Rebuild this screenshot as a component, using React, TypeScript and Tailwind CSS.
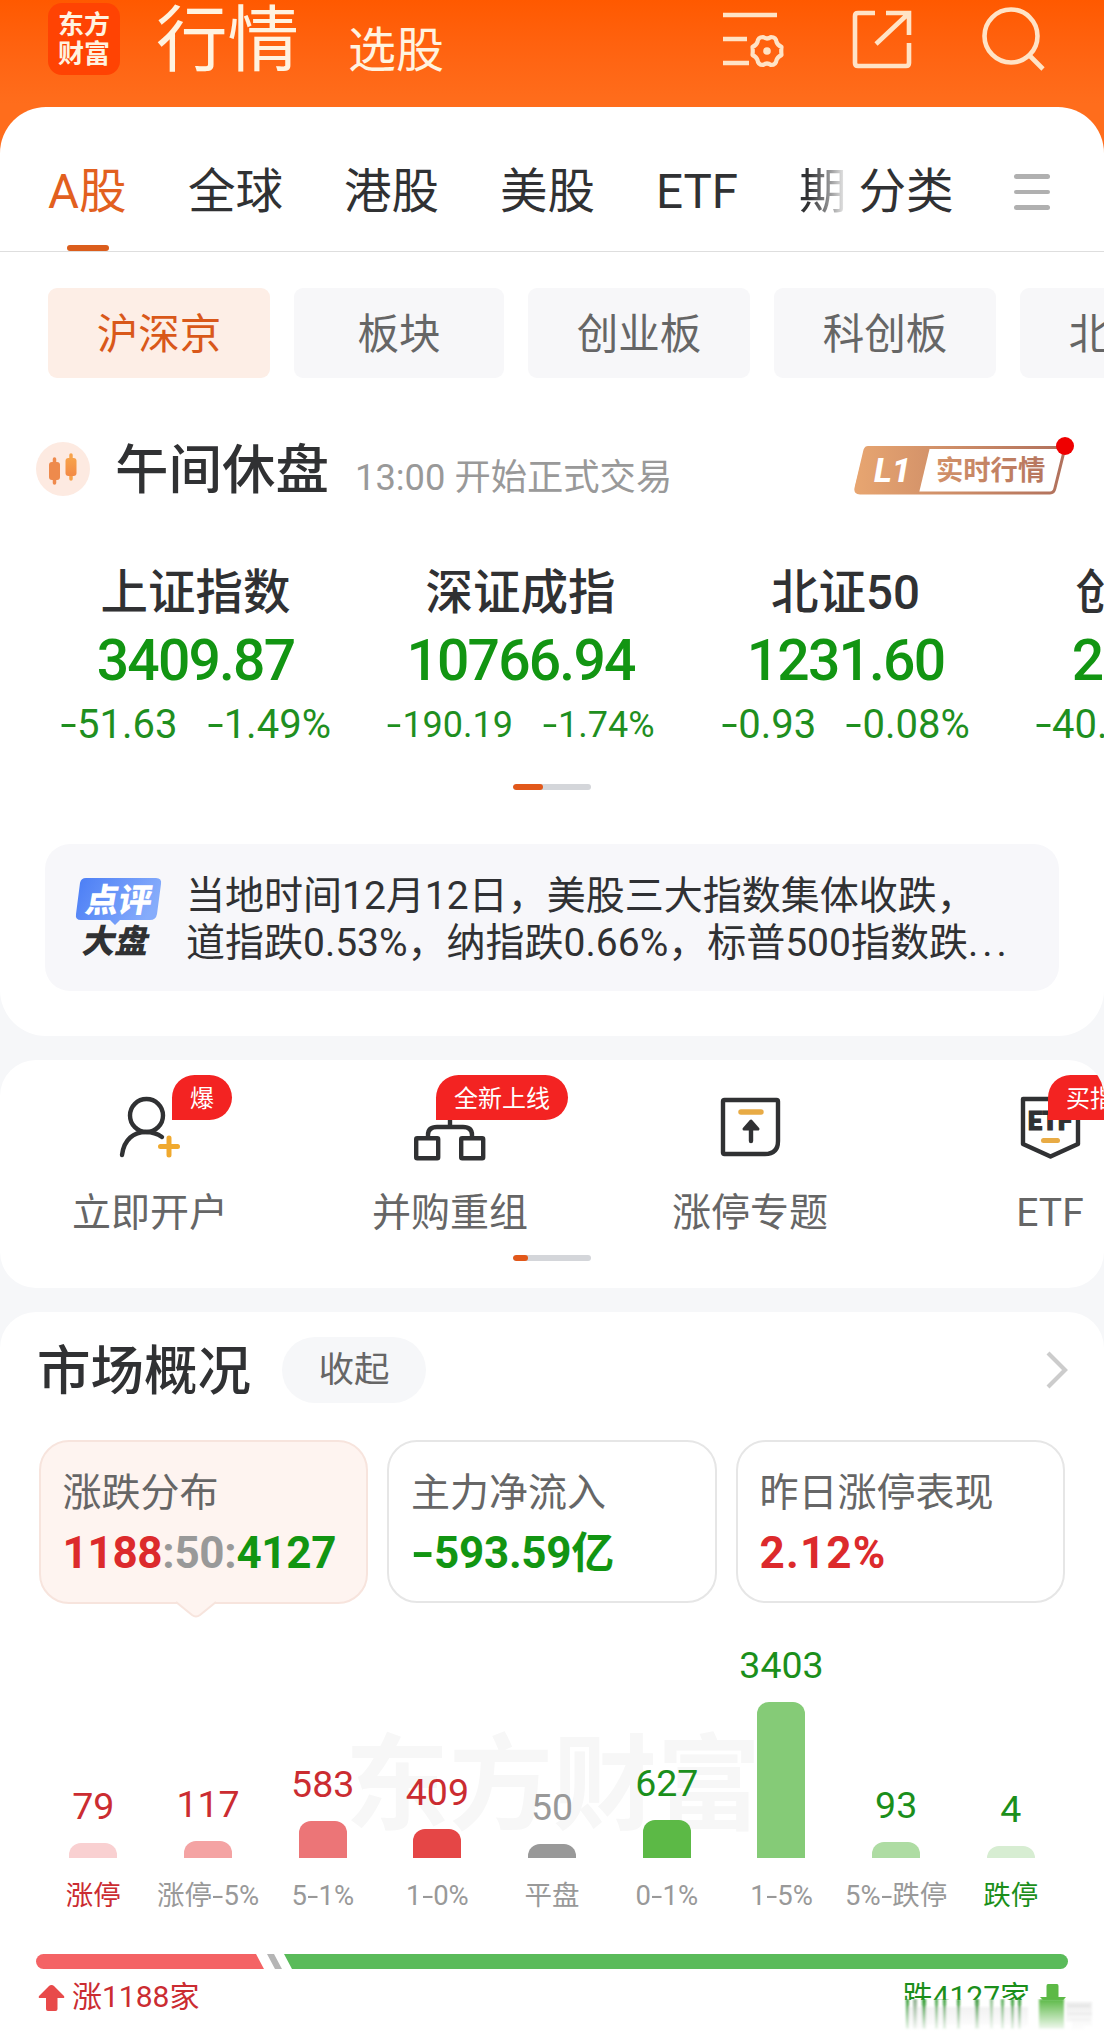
import type { ReactNode } from 'react';
import clsx from 'clsx';

const tabs = ['全球', '港股', '美股', 'ETF'];

const boards = [
  { label: '沪深京', width: 'w-[222px]', active: true },
  { label: '板块', width: 'w-[210px]' },
  { label: '创业板', width: 'w-[222px]' },
  { label: '科创板', width: 'w-[222px]' },
  { label: '北证板', width: 'w-[222px]' },
];

const indices = [
  { name: '上证指数', value: '3409.87', change: '51.63', percent: '1.49%' },
  { name: '深证成指', value: '10766.94', change: '190.19', percent: '1.74%', small: true },
  { name: '北证50', value: '1231.60', change: '0.93', percent: '0.08%' },
  { name: '创业板指', value: '2235.33', change: '40.65', percent: '1.79%' },
];

const distribution = [
  { label: '涨停', count: 79, height: 15, bar: 'bg-[#f9d0d1]', text: 'text-[#cb2c31]', labelText: 'text-[#cb2c31]' },
  { label: '涨停-5%', count: 117, height: 17, bar: 'bg-[#f4a3a3]', text: 'text-[#cb2c31]' },
  { label: '5-1%', count: 583, height: 37, bar: 'bg-[#ec7577]', text: 'text-[#cb2c31]' },
  { label: '1-0%', count: 409, height: 29, bar: 'bg-[#e54646]', text: 'text-[#cb2c31]' },
  { label: '平盘', count: 50, height: 14, bar: 'bg-[#999999]', text: 'text-[#999999]' },
  { label: '0-1%', count: 627, height: 38, bar: 'bg-[#5cb946]', text: 'text-[#1b8f1b]' },
  { label: '1-5%', count: 3403, height: 156, bar: 'bg-[#85cb77]', text: 'text-[#1b8f1b]' },
  { label: '5%-跌停', count: 93, height: 16, bar: 'bg-[#aedca3]', text: 'text-[#1b8f1b]' },
  { label: '跌停', count: 4, height: 12, bar: 'bg-[#d7edd2]', text: 'text-[#1b8f1b]', labelText: 'text-[#1b8f1b]' },
];

const Minus = () => <span className="mx-[3px] inline-block scale-x-[1.45]">-</span>;

const Pager = ({ wide }: { wide?: boolean }) => (
  <div className="mx-auto h-1.5 w-[78px] overflow-hidden rounded-full bg-[#d4d6da]">
    <div className={clsx('h-full rounded-full bg-[#e2581a]', wide ? 'w-[30px]' : 'w-[15px]')} />
  </div>
);

const Header = () => (
  <header className="flex h-[160px] items-start bg-linear-to-b from-[#ff5900] from-0% to-[#ff6d1c] to-65% text-[#fff3e0]">
    <div className="mt-[3px] ml-12 flex h-[72px] w-[72px] flex-col items-center justify-center rounded-[14px] bg-[#ff4303] pt-[2px] text-[26px] leading-[29px] font-bold">
      <span>东方</span>
      <span>财富</span>
    </div>
    <h1 className="mt-[2px] ml-9 text-[71.500px] leading-[78px]">行情</h1>
    <span className="mt-[21px] ml-[49px] text-[48px] leading-[60px]">选股</span>
    <svg className="absolute top-0 left-[720px]" width="336" height="80" fill="none" stroke="#ffe3c6" strokeWidth="4.6">
      <path d="M3 15h54M3 39h24M3 63h26" />
      <path
        strokeWidth="4.2"
        strokeLinejoin="round"
        d="M43 37q4 3 8 0q5 0 5.500 5q1 3 5 5q-.5 4 0 8q-4 2-5 5q-.5 5-5.500 5q-4-3-8 0q-5 0-5.500-5q-1-3-5-5q.5-4 0-8q4-2 5-5q.5-5 5.500-5z"
      />
      <circle cx="47" cy="51" r="3.800" fill="#ffe3c6" stroke="none" />
      <path d="M155 13h-17q-3 0-3 3v47q0 3 3 3h48q3 0 3-3V43M166 13h23v22M188 14l-32 30" />
      <circle cx="291" cy="36" r="26.500" />
      <path d="M309 55l14 14" />
    </svg>
  </header>
);

const Tabs = () => (
  <nav className="relative flex h-[145px] items-center border-b border-[#dedede] pt-[28px] text-[47.500px] text-[#303133]">
    <div className="absolute bottom-0 left-[67px] h-1.5 w-[42px] rounded-full bg-[#db5d1c]" />
    <span className="ml-12 w-[79px] whitespace-nowrap text-[#e2601f]">A股</span>
    <div className="ml-[61px] flex gap-[61px]">
      {tabs.map((tab) => (
        <span key={tab}>{tab}</span>
      ))}
    </div>
    <span className="ml-[61px] bg-linear-to-r from-[#303133] from-20% to-[#e8e8e8] to-95% bg-clip-text text-transparent">期</span>
    <span className="ml-[12px]">分类</span>
    <div className="relative -top-[1px] mr-[54px] ml-auto flex w-9 flex-col gap-[11px]">
      <i className="h-[4.500px] rounded-full bg-[#b0b0b0]" />
      <i className="h-[4.500px] rounded-full bg-[#b0b0b0]" />
      <i className="h-[4.500px] rounded-full bg-[#b0b0b0]" />
    </div>
  </nav>
);

const LevelBadge = () => (
  <svg width="222" height="64" viewBox="0 0 222 64">
    <defs>
      <linearGradient id="copper" gradientUnits="userSpaceOnUse" x1="0" y1="0" x2="214" y2="0">
        <stop offset="0" stopColor="#e8a671" />
        <stop offset="1" stopColor="#b0705c" />
      </linearGradient>
    </defs>
    <path d="M15 13.500H212L202 54q-1 5-5 5H7q-5 0-4-5L12 16q1-2.500 3-2.500z" fill="none" stroke="url(#copper)" strokeWidth="3" />
    <path d="M16 13H77L66 59H7q-6 0-5-6L11 17q1-4 5-4z" fill="url(#copper)" />
    <text x="21" y="48" fill="#fff" fontSize="34" fontWeight="800" fontStyle="italic" fontFamily="Roboto">L1</text>
    <text x="83" y="46" fill="url(#copper)" fontSize="27.300" fontWeight="700" fontFamily="Noto Sans CJK SC">实时行情</text>
    <circle cx="212" cy="12" r="9" fill="#ef0000" />
  </svg>
);

const MarketStatus = () => (
  <div className="mt-[59px] flex h-16 items-center pl-9">
    <svg width="54" height="54" viewBox="0 0 54 54">
      <defs>
        <linearGradient id="candle" x1="0" y1="0" x2="0" y2="1">
          <stop offset="0" stopColor="#f7a24a" />
          <stop offset="1" stopColor="#f38a45" />
        </linearGradient>
      </defs>
      <circle cx="27" cy="27" r="27" fill="#fdeae1" />
      <path d="M18.500 17v24" stroke="#ef8a4c" strokeWidth="3.500" strokeLinecap="round" />
      <rect x="13" y="20" width="11" height="18" rx="3" fill="#ee8a4c" />
      <path d="M35 13v24" stroke="#f7a24a" strokeWidth="3.500" strokeLinecap="round" />
      <rect x="29.500" y="16" width="11" height="18" rx="3" fill="url(#candle)" />
    </svg>
    <h2 className="mt-[5px] ml-[25px] text-[53.500px] font-medium text-[#303133]">午间休盘</h2>
    <span className="mt-[19px] ml-[26px] text-[36.300px] text-[#999]">13:00 开始正式交易</span>
    <div className="relative -top-[3px] ml-auto mr-[29px]">
      <LevelBadge />
    </div>
  </div>
);

const IndexStrip = () => (
  <div className="mt-[57px] flex h-[200px] pl-[33px] text-center">
    {indices.map((item) => (
      <div key={item.name} className="w-[325px] shrink-0 whitespace-nowrap">
        <div className="text-[47.500px] leading-[70px] font-medium text-[#303133]">{item.name}</div>
        <div className="text-[57px] leading-[66px] font-medium tracking-[-1.800px] text-[#129512]">{item.value}</div>
        <div
          className={clsx(
            'flex justify-center leading-[62px] text-[#1f8f1f]',
            item.small ? 'gap-[29px] text-[36px]' : 'gap-[29px] text-[40px]'
          )}
        >
          <span><Minus />{item.change}</span>
          <span><Minus />{item.percent}</span>
        </div>
      </div>
    ))}
  </div>
);

const Comment = () => (
  <div className="mx-[45px] mt-[54px] flex h-[147px] rounded-[25px] bg-[#f7f7fa]">
    <svg className="mt-[30px] ml-[28px] shrink-0" width="92" height="90" viewBox="0 0 92 90">
      <defs>
        <linearGradient id="bubble" x1="0" y1="0" x2="1" y2="0.300">
          <stop offset="0" stopColor="#4a7df5" />
          <stop offset="1" stopColor="#86acfb" />
        </linearGradient>
      </defs>
      <path d="M13 4H83q6 0 5 6L84 40q-1 6-7 6H47l-5 5-5-5H8q-6 0-5-6L7 9q1-5 6-5z" fill="url(#bubble)" />
      <g fontFamily="Noto Sans CJK SC" fontWeight="900">
        <text transform="translate(11 38) skewX(-10)" fill="#fff" fontSize="33">点评</text>
        <text transform="translate(8 79) skewX(-12)" fill="#303133" fontSize="33">大盘</text>
      </g>
    </svg>
    <p className="mt-[29px] ml-[21px] text-[39px] leading-[46.500px] whitespace-nowrap text-[#303133]">
      当地时间12月12日，美股三大指数集体收跌，
      <br />
      道指跌0.53%，纳指跌0.66%，标普500指数跌<span className="tracking-[4px]">...</span>
    </p>
  </div>
);

const Shortcut = ({ label, badge, badgeLeft, children }: { label: string; badge?: string; badgeLeft?: string; children: ReactNode }) => (
  <div className="relative flex w-[300px] shrink-0 flex-col items-center">
    <svg className="mt-[30px]" width="90" height="76" viewBox="0 0 90 76" fill="none" stroke="#303133" strokeWidth="4.400">
      {children}
    </svg>
    {badge && (
      <span
        className={clsx(
          'absolute top-[15px] h-[45px] rounded-[23px] rounded-bl-none bg-[#f32322] px-[18px] text-[24px] leading-[48px] whitespace-nowrap text-white',
          badgeLeft
        )}
      >
        {badge}
      </span>
    )}
    <span className="mt-[18px] text-[39px] leading-[58px] text-[#666]">{label}</span>
  </div>
);

const Shortcuts = () => (
  <section className="mt-6 h-[228px] overflow-hidden rounded-[36px] bg-white">
    <div className="flex h-[195px]">
      <Shortcut label="立即开户" badge="爆" badgeLeft="left-[172px]">
        <circle cx="41.500" cy="25.500" r="16.500" />
        <path d="M17 65C19 49 29 42 41 42Q50 42 57 47" strokeLinecap="round" />
        <path d="M64 48v17M55.500 56.500h17" stroke="#f0a92e" strokeWidth="5" strokeLinecap="round" />
      </Shortcut>
      <Shortcut label="并购重组" badge="全新上线" badgeLeft="left-[136px]">
        <path d="M45 28v9M23 47V45Q23 37 32 37H58Q67 37 67 45V47" />
        <rect x="11.200" y="48.200" width="22" height="20" rx="1" />
        <rect x="56.200" y="48.200" width="22" height="20" rx="1" />
      </Shortcut>
      <Shortcut label="涨停专题">
        <path d="M19.500 10h52q1.500 0 1.500 1.500V51Q73 64 60 64H19.500Q18 64 18 62.500V11.500Q18 10 19.500 10z" />
        <path d="M36 22h20" stroke="#e8ab45" strokeWidth="5.500" strokeLinecap="round" />
        <path d="M46 34v17" strokeLinecap="round" />
        <path d="M46 31l7 8H39z" fill="#303133" strokeWidth="3" strokeLinejoin="round" />
      </Shortcut>
      <Shortcut label="ETF" badge="买指数" badgeLeft="left-[148px]">
        <path d="M18 9H73V54L45.500 66.500L18 54z" strokeLinejoin="round" />
        <text x="23" y="40" fill="#303133" stroke="#303133" strokeWidth="1.200" fontSize="25" fontWeight="900" fontFamily="Roboto">ETF</text>
        <path d="M38.500 50.500h14" stroke="#e8ab45" strokeWidth="5" strokeLinecap="round" />
      </Shortcut>
    </div>
    <Pager />
  </section>
);

const SummaryCards = () => (
  <div className="mt-[38px] grid grid-cols-3 gap-[19px] pr-[39px] pl-[38.500px] text-[44px] font-bold tracking-[-0.300px]">
    <div className="relative h-[164px] rounded-[30px] border-2 border-[#f7e4dd] bg-[#fef4f0] pt-[21px] pl-[22px]">
      <div className="text-[39px] leading-[60px] font-normal tracking-normal text-[#666]">涨跌分布</div>
      <div className="leading-[60px] text-[#999]">
        <span className="text-[#dc2a2c]">1188</span>:50:<span className="text-[#129512]">4127</span>
      </div>
      <svg className="absolute -bottom-[16px] left-[134px]" width="42" height="17" viewBox="0 0 42 17">
        <path d="M1 0L17 14q4 3 8 0L41 0z" fill="#fef4f0" />
        <path d="M1 1L17 14q4 3 8 0L41 1" fill="none" stroke="#f7e4dd" strokeWidth="2" />
      </svg>
    </div>
    <div className="h-[163px] rounded-[30px] border-2 border-[#e6e6e6] pt-[21px] pl-[22px]">
      <div className="text-[39px] leading-[60px] font-normal tracking-normal text-[#666]">主力净流入</div>
      <div className="leading-[60px] whitespace-nowrap text-[#129512]"><Minus />593.59<span className="text-[43px]">亿</span></div>
    </div>
    <div className="h-[163px] rounded-[30px] border-2 border-[#e6e6e6] pt-[21px] pl-[22px]">
      <div className="text-[39px] leading-[60px] font-normal tracking-normal text-[#666]">昨日涨停表现</div>
      <div className="leading-[60px] tracking-[1.200px] text-[#dc2a2c]">2.12%</div>
    </div>
  </div>
);

// widens the hyphen of a range such as "5-1%"
const RangeLabel = ({ text }: { text: string }) => {
  const [from, to] = text.split('-');
  return (
    <>
      {from}
      {to && <><span className="mx-[2px] inline-block scale-x-[1.45]">-</span>{to}</>}
    </>
  );
};

const DistributionChart = () => (
  <div className="relative mt-[32px] h-[280px]">
    <div className="absolute top-[81px] left-[345px] text-[104px] leading-[140px] font-bold text-[#f7f7f7]">东方财富</div>
    <div className="relative flex h-full pl-[36px]">
      {distribution.map((item) => (
        <div key={item.label} className="flex w-[114.700px] shrink-0 flex-col items-center justify-end whitespace-nowrap">
          <span className={clsx('mb-[15px] text-[37.500px] leading-[44px]', item.text)}>{item.count}</span>
          <div className={clsx('w-12 rounded-t-[12px]', item.bar)} style={{ height: item.height }} />
          <span className={clsx('mt-[18px] text-[27.500px] leading-[40px]', item.labelText ?? 'text-[#999]')}>
            <RangeLabel text={item.label} />
          </span>
        </div>
      ))}
    </div>
  </div>
);

const RiseFall = () => (
  <div className="px-9">
    <svg className="mt-[38px] block" width="1032" height="15" viewBox="0 0 1032 15">
      <path d="M7.500 0H220L228 15H7.500a7.500 7.500 0 0 1 0-15z" fill="#f46365" />
      <path d="M231 0h7l8 15h-7z" fill="#b5b5b5" />
      <path d="M248 0H1024.500a7.500 7.500 0 0 1 0 15H256z" fill="#5abb5a" />
    </svg>
    <div className="flex h-[65px] items-start pt-[6px] text-[30px] leading-[44px]">
      <svg className="mt-[10px] ml-[2px]" width="27" height="27" viewBox="0 0 27 27">
        <path d="M13.500 0Q15 0 16 1L26 11q1 2-1 2H19.500V24q0 2-2 2H10q-2 0-2-2V13H2q-2 0-1-2L11 1q1-1 2.500-1z" fill="#e84a4a" />
      </svg>
      <span className="ml-[7px] text-[#cb2c31]">涨1188家</span>
      <div className="relative mr-[2px] ml-auto flex h-[25px] overflow-hidden">
        <span className="whitespace-nowrap text-[#1b8f1b]">跌4127家</span>
        <svg className="mt-[9px] ml-[9px]" width="27" height="27" viewBox="0 0 27 27">
          <path d="M9 0h9q1.500 0 1.500 2v11H27L14 27 1 13H7.500V2Q7.500 0 9 0z" fill="#5cb946" />
        </svg>
      </div>
    </div>
  </div>
);

// vertical streaks that fade out under the fall count
const streaks = [
  { x: 2, w: 3, c: '#2f9a2f' }, { x: 9, w: 4, c: '#8fb08f' }, { x: 18, w: 4, c: '#2f9a2f' }, { x: 31, w: 3, c: '#4aa64a' },
  { x: 39, w: 3, c: '#2f9a2f' }, { x: 53, w: 3, c: '#2f9a2f' }, { x: 71, w: 4, c: '#3f9a3f' }, { x: 86, w: 3, c: '#8fc08f' },
  { x: 97, w: 3, c: '#55aa55' }, { x: 107, w: 3, c: '#2f9a2f' }, { x: 114, w: 3, c: '#2f9a2f' }, { x: 135, w: 25, c: '#5cb946' },
];

const Smear = () => (
  <svg className="absolute right-2 bottom-[6px]" width="192" height="34" viewBox="0 0 192 34">
    <defs>
      <linearGradient id="fade" x1="0" y1="0" x2="0" y2="1">
        <stop offset="0" stopColor="#fff" stopOpacity="0" />
        <stop offset="1" stopColor="#fff" />
      </linearGradient>
      <filter id="soft"><feGaussianBlur stdDeviation="1.200" /></filter>
    </defs>
    <g filter="url(#soft)">
      <path d="M4 8h120v18q-8 5-16 0H24q-10 8-18 0z" fill="#eeeeee" />
      <path d="M162 3h26v24h-8v4h-12v-8h-6z" fill="#ececec" />
      <path d="M164 7h22M164 15h24M166 21h20" stroke="#dcdcdc" strokeWidth="2" />
      {streaks.map((s) => (
        <rect key={s.x} x={s.x} y="0" width={s.w} height="30" fill={s.c} />
      ))}
    </g>
    <rect width="192" height="33" fill="url(#fade)" />
  </svg>
);

const App = () => (
  <main
    className="relative h-[2039px] w-[1104px] overflow-hidden bg-[#f6f7f9]"
    style={{ fontFamily: 'Roboto, "Noto Sans CJK SC", sans-serif' }}
  >
    <Header />

    <section className="relative -mt-[53px] h-[929px] overflow-hidden rounded-[46px] bg-white">
      <Tabs />
      <div className="mt-9 flex gap-6 pl-12">
        {boards.map((board) => (
          <div
            key={board.label}
            className={clsx(
              'flex h-[90px] shrink-0 items-center justify-center rounded-[9px] pt-[4px] text-[41.500px]',
              board.width,
              board.active ? 'bg-[#fdeee6] text-[#d9581a]' : 'bg-[#f7f7f9] text-[#666]'
            )}
          >
            {board.label}
          </div>
        ))}
      </div>
      <MarketStatus />
      <IndexStrip />
      <div className="mt-[26px]">
        <Pager wide />
      </div>
      <Comment />
    </section>

    <Shortcuts />

    <section className="relative mt-6 h-[727px] rounded-t-[36px] bg-white">
      <div className="flex h-[90px] items-center pt-[25px] pr-9 pl-[37px]">
        <h2 className="mt-[5px] text-[53.500px] font-medium text-[#303133]">市场概况</h2>
        <button className="ml-[31px] h-[66px] w-[144px] rounded-full bg-[#f6f7f9] pt-[3px] text-[35.500px] text-[#666]">收起</button>
        <svg className="ml-auto" width="22" height="38" viewBox="0 0 22 38">
          <path d="M2 2l17 17L2 36" fill="none" stroke="#ccc" strokeWidth="4.200" />
        </svg>
      </div>
      <SummaryCards />
      <DistributionChart />
      <RiseFall />
      <Smear />
    </section>
  </main>
);

export default App;
